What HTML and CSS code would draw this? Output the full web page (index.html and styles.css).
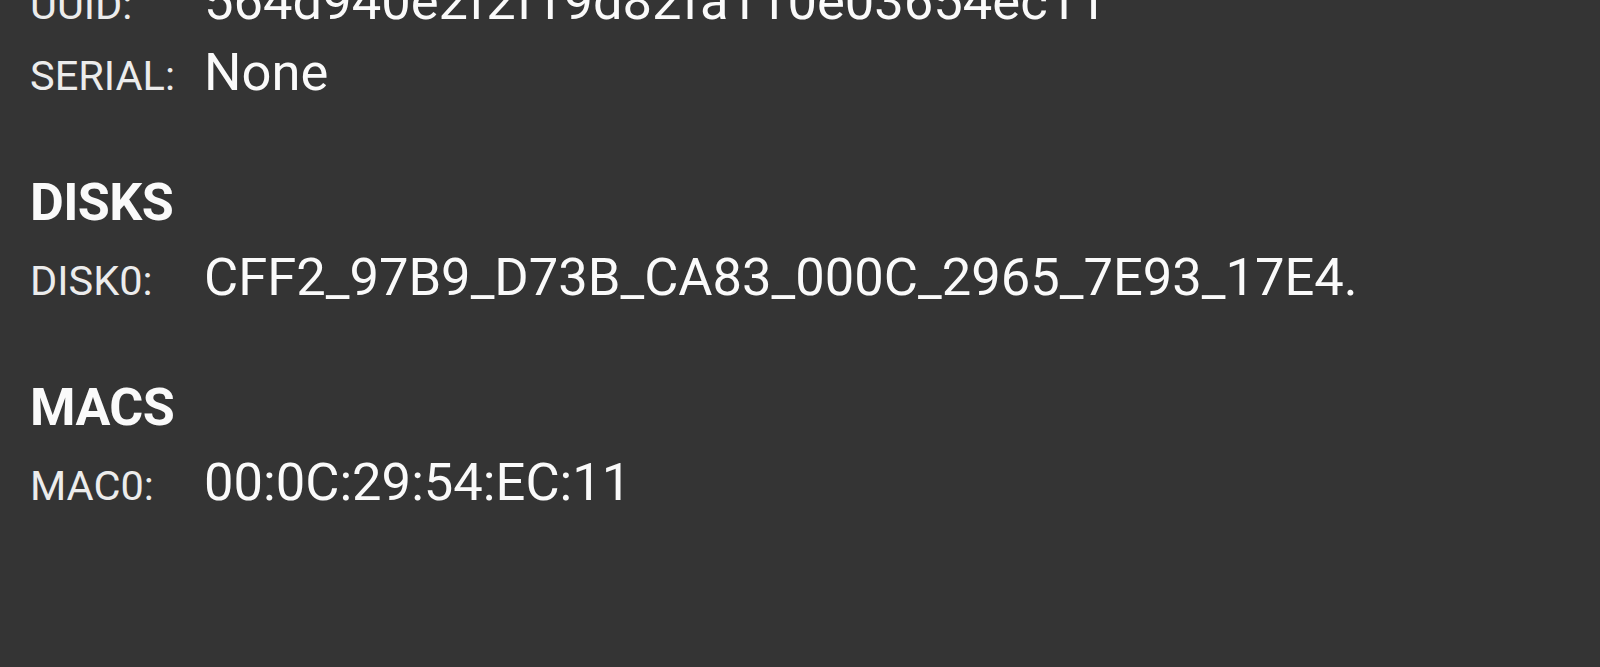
FILE: index.html
```html
<!DOCTYPE html>
<html>
<head>
<meta charset="utf-8">
<link rel="stylesheet" href="styles.css">
</head>
<body>
<div class="panel">
  <section class="group group-first">
    <div class="row"><span class="label">UUID:</span><span class="value">564d940e2f2f19d82fa110e03654ec11</span></div>
    <div class="row"><span class="label">SERIAL:</span><span class="value">None</span></div>
  </section>
  <section class="group">
    <h2 class="heading">DISKS</h2>
    <div class="row"><span class="label">DISK0:</span><span class="value">CFF2_97B9_D73B_CA83_000C_2965_7E93_17E4.</span></div>
  </section>
  <section class="group">
    <h2 class="heading">MACS</h2>
    <div class="row"><span class="label">MAC0:</span><span class="value">00:0C:29:54:EC:11</span></div>
  </section>
</div>
</body>
</html>
```
FILE: styles.css
```css
html, body {
  margin: 0;
  padding: 0;
  background: #343434;
  height: 100%;
  overflow: hidden;
}
.panel {
  font-family: Roboto, "Noto Sans", sans-serif;
  color: #fafafa;
  padding-left: 30px;
  margin-top: -34px;
}
.group {
  margin-top: 65px;
}
.group-first {
  margin-top: 0;
}
.heading {
  margin: 0 0 9px 0;
  font-size: 52px;
  font-weight: 700;
  line-height: 60px;
  letter-spacing: -0.6px;
}
.row {
  display: grid;
  grid-template-columns: 174px auto;
  align-items: baseline;
  height: 71px;
  line-height: 71px;
}
.label {
  font-size: 41.5px;
  color: #ececec;
  letter-spacing: 0;
}
.value {
  font-size: 52.5px;
}
```
